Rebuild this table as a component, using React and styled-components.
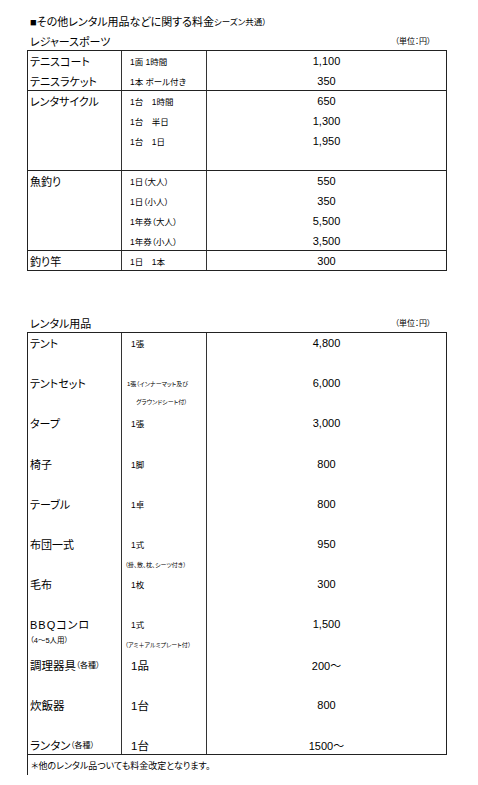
import styled, { createGlobalStyle } from 'styled-components';

const GlobalStyle = createGlobalStyle`
  html, body {
    margin: 0;
    padding: 0;
    background: #fff;
  }
  body {
    font-family: 'Liberation Sans', 'Noto Sans CJK JP', sans-serif;
    font-feature-settings: 'palt' 1;
    color: #000;
  }
`;

const Page = styled.div`
  width: 420px;
  padding: 10px 0 10px 27px;
`;

const Title = styled.div`
  height: 21px;
  display: flex;
  align-items: center;
  padding-left: 3px;
  font-size: 11px;
  white-space: nowrap;
`;

const TitleNote = styled.span`
  font-size: 8.5px;
`;

const SectionHead = styled.div`
  height: 19px;
  display: flex;
  align-items: center;
  justify-content: space-between;
  padding: 0 16px 0 3px;
  font-size: 11px;
  margin-top: ${p => p.$gap || 0}px;
`;

const Unit = styled.span`
  font-size: 8px;
`;

const Table = styled.div`
  border: 1px solid #222;
  border-bottom: none;
`;

const Group = styled.div`
  box-sizing: border-box;
  display: grid;
  grid-template-columns: 94px 85px 1fr;
  border-bottom: 1px solid #222;
`;

const Col = styled.div`
  display: grid;
  grid-auto-rows: ${p => p.$row || 20}px;
  border-right: ${p => (p.$last ? 'none' : '1px solid #333')};
  padding-left: ${p => p.$pad || 0}px;
  min-height: 0;
`;

const sizes = { lg: 11.5, md: 11, sm: 8.5, xs: 6, note: 7.5 };

const Line = styled.div`
  display: flex;
  align-items: center;
  justify-content: ${p => (p.$center ? 'center' : 'flex-start')};
  font-size: ${p => sizes[p.$size || 'md']}px;
  padding-left: ${p => p.$indent || 0}px;
  white-space: nowrap;
  position: relative;
  top: ${p => p.$shift || 0}px;
  letter-spacing: ${p => p.$spread || 0}px;
`;

const Small = styled.span`
  font-size: 8px;
`;

const Footer = styled.div`
  height: 20px;
  border-left: 1px solid #222;
  display: flex;
  align-items: center;
  padding-left: 3px;
  font-size: 9px;
`;

const leisure = [
  {
    names: ['テニスコート', 'テニスラケット'],
    units: ['1面 1時間', '1本 ボール付き'],
    prices: ['1,100', '350'],
    rows: 2,
  },
  {
    names: ['レンタサイクル'],
    units: ['1台　1時間', '1台　半日', '1台　1日'],
    prices: ['650', '1,300', '1,950'],
    rows: 4,
  },
  {
    names: ['魚釣り'],
    units: ['1日（大人）', '1日（小人）', '1年券（大人）', '1年券（小人）'],
    prices: ['550', '350', '5,500', '3,500'],
    rows: 4,
  },
  {
    names: ['釣り竿'],
    units: ['1日　1本'],
    prices: ['300'],
    rows: 1,
  },
];

function pad(list, n) {
  const out = list.slice();
  while (out.length < n) out.push('');
  return out;
}

function LeisureTable() {
  return (
    <Table>
      {leisure.map((g, i) => (
        <Group key={i} style={{ height: g.rows * 20 }}>
          <Col $pad={2}>
            {pad(g.names, g.rows).map((n, j) => (
              <Line key={j}>{n}</Line>
            ))}
          </Col>
          <Col $pad={8}>
            {pad(g.units, g.rows).map((u, j) => (
              <Line key={j} $size="sm">{u}</Line>
            ))}
          </Col>
          <Col $last>
            {pad(g.prices, g.rows).map((p, j) => (
              <Line key={j} $center>{p}</Line>
            ))}
          </Col>
        </Group>
      ))}
    </Table>
  );
}

// 21 lines per column; an empty entry is a blank line
const rentalNames = [
  { t: 'テント' },
  {},
  { t: 'テントセット' },
  {},
  { t: 'タープ' },
  {},
  { t: '椅子' },
  {},
  { t: 'テーブル' },
  {},
  { t: '布団一式' },
  {},
  { t: '毛布' },
  {},
  { t: 'BBQコンロ', spread: 1 },
  { t: '（4～5人用）', size: 'note', shift: -5 },
  { t: '調理器具', sub: '（各種）', size: 'lg' },
  {},
  { t: '炊飯器', size: 'lg' },
  {},
  { t: 'ランタン', sub: '（各種）', size: 'lg' },
];

const rentalUnits = [
  { t: '1張', size: 'sm', indent: 9 },
  {},
  { t: '1張（インナーマット及び', size: 'xs', indent: 5 },
  { t: 'グラウンドシート付）', size: 'xs', indent: 14, shift: -2 },
  { t: '1張', size: 'sm', indent: 9 },
  {},
  { t: '1脚', size: 'sm', indent: 9 },
  {},
  { t: '1卓', size: 'sm', indent: 9 },
  {},
  { t: '1式', size: 'sm', indent: 9 },
  { t: '（掛、敷、枕、シーツ付き）', size: 'xs', indent: 3 },
  { t: '1枚', size: 'sm', indent: 9 },
  {},
  { t: '1式', size: 'sm', indent: 9 },
  { t: '（アミ＋アルミプレート付）', size: 'xs', indent: 3 },
  { t: '1品', size: 'lg', indent: 9 },
  {},
  { t: '1台', size: 'lg', indent: 9 },
  {},
  { t: '1台', size: 'lg', indent: 9 },
];

const rentalPrices = [
  '4,800', '', '6,000', '', '3,000', '', '800', '', '800', '', '950', '',
  '300', '', '1,500', '', '200～', '', '800', '', '1500～',
];

const ROW = 20.1;

function RentalTable() {
  return (
    <>
      <Table>
        <Group style={{ height: 21 * ROW }}>
          <Col $pad={2} $row={ROW}>
            {rentalNames.map((n, i) => (
              <Line key={i} $size={n.size} $shift={n.shift} $spread={n.spread}>
                {n.t}
                {n.sub && <Small>{n.sub}</Small>}
              </Line>
            ))}
          </Col>
          <Col $row={ROW}>
            {rentalUnits.map((u, i) => (
              <Line key={i} $size={u.size} $indent={u.indent} $shift={u.shift}>
                {u.t}
              </Line>
            ))}
          </Col>
          <Col $last $row={ROW}>
            {rentalPrices.map((p, i) => (
              <Line key={i} $center>{p}</Line>
            ))}
          </Col>
        </Group>
      </Table>
      <Footer>＊他のレンタル品ついても料金改定となります。</Footer>
    </>
  );
}

export default function App() {
  return (
    <>
      <GlobalStyle />
      <Page>
        <Title>
          ■その他レンタル用品などに関する料金<TitleNote>シーズン共通）</TitleNote>
        </Title>
        <SectionHead>
          <span>レジャースポーツ</span>
          <Unit>（単位：円）</Unit>
        </SectionHead>
        <LeisureTable />
        <SectionHead $gap={42}>
          <span>レンタル用品</span>
          <Unit>（単位：円）</Unit>
        </SectionHead>
        <RentalTable />
      </Page>
    </>
  );
}
